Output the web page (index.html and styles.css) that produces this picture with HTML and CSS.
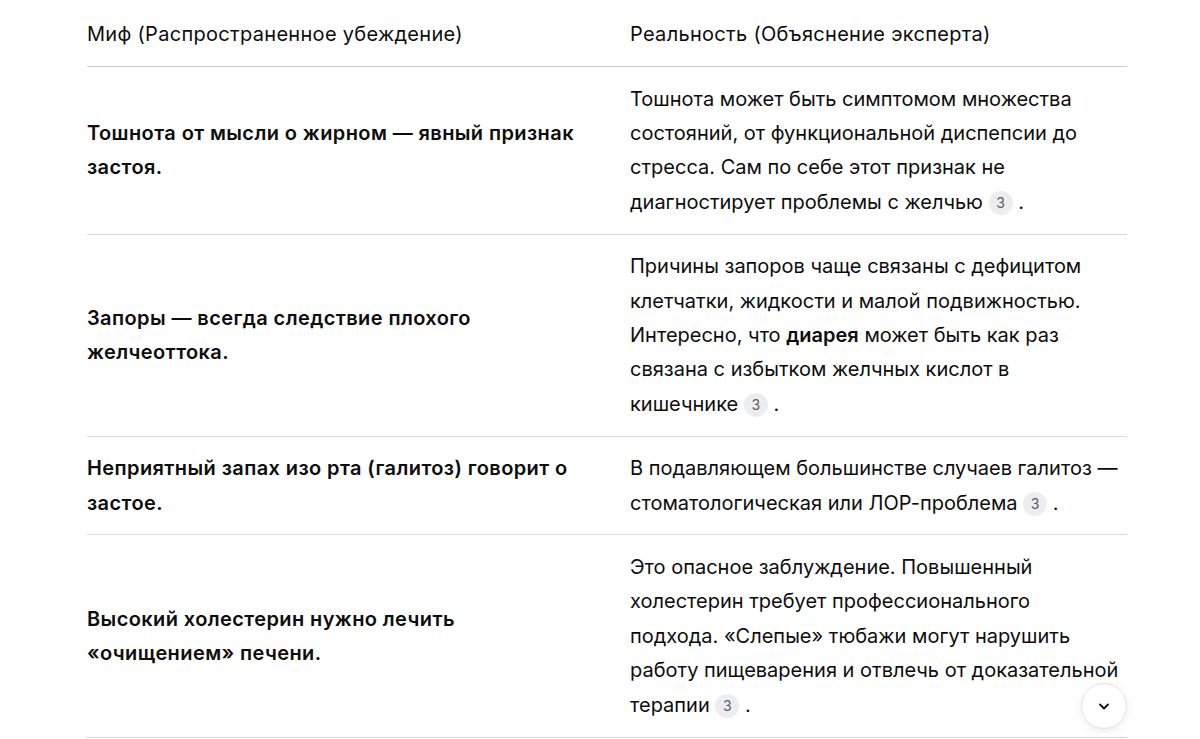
FILE: index.html
```html
<!DOCTYPE html>
<html lang="ru">
<head>
<meta charset="utf-8">
<link rel="stylesheet" href="styles.css">
</head>
<body>
<div class="wrap">
<table class="mt">
<thead>
<tr><th>Миф (Распространенное убеждение)</th><th>Реальность (Объяснение эксперта)</th></tr>
</thead>
<tbody>
<tr>
<td class="myth">Тошнота от мысли о жирном — явный признак застоя.</td>
<td>Тошнота может быть симптомом множества состояний, от функциональной диспепсии до стресса. Сам по себе этот признак не диагностирует проблемы с желчью <span class="cite">3</span> .</td>
</tr>
<tr>
<td class="myth">Запоры — всегда следствие плохого желчеоттока.</td>
<td>Причины запоров чаще связаны с дефицитом клетчатки, жидкости и малой подвижностью. Интересно, что <strong>диарея</strong> может быть как раз связана с избытком желчных кислот в кишечнике <span class="cite">3</span> .</td>
</tr>
<tr>
<td class="myth">Неприятный запах изо рта (галитоз) говорит о застое.</td>
<td>В подавляющем большинстве случаев галитоз — стоматологическая или ЛОР-проблема <span class="cite">3</span> .</td>
</tr>
<tr>
<td class="myth">Высокий холестерин нужно лечить «очищением» печени.</td>
<td>Это опасное заблуждение. Повышенный холестерин требует профессионального подхода. «Слепые» тюбажи могут нарушить работу пищеварения и отвлечь от доказательной терапии <span class="cite">3</span> .</td>
</tr>
</tbody>
</table>
</div>
<button class="scroll-down" aria-label="Прокрутить вниз">
<svg width="16" height="16" viewBox="0 0 16 16" fill="none"><path d="M4 6.5l4 4 4-4" stroke="#111" stroke-width="1.8" stroke-linecap="round" stroke-linejoin="round"/></svg>
</button>
</body>
</html>
```

FILE: styles.css
```css
html, body {
  margin: 0;
  padding: 0;
  background: #fff;
  height: 100%;
  overflow: hidden;
}
body {
  font-family: Inter, "Noto Sans", sans-serif;
  color: #0d0d0d;
  font-size: 20px;
  line-height: 34.4px;
}
.wrap {
  padding: 0 73px 0 87px;
}
.mt {
  width: 100%;
  border-collapse: collapse;
  table-layout: fixed;
}
.mt th {
  font-weight: 400;
  text-align: left;
  letter-spacing: 0.3px;
  line-height: 34px;
  padding: 17px 0 15px 0;
  border-bottom: 1px solid #cfcfcf;
}
.mt th:first-child, .mt td:first-child {
  width: 500px;
  padding-right: 43px;
}
.mt th:last-child, .mt td:last-child {
  padding-right: 5px;
}
.mt td {
  vertical-align: middle;
  padding: 14.5px 0 14.5px 0;
  border-bottom: 1px solid #d9d9d9;
}
.mt td.myth {
  font-weight: 600;
  letter-spacing: 0.4px;
}
.mt strong { font-weight: 600; }
.cite {
  display: inline-flex;
  align-items: center;
  justify-content: center;
  min-width: 24px;
  height: 24px;
  padding: 0 4px;
  box-sizing: border-box;
  border-radius: 12px;
  background: #ecedf0;
  color: #5d5d5d;
  font-size: 14px;
  line-height: 24px;
  vertical-align: 1px;
}
.scroll-down {
  position: fixed;
  left: 1081px;
  top: 683px;
  width: 46px;
  height: 46px;
  border-radius: 50%;
  background: #fff;
  border: 1px solid #e3e3e3;
  box-shadow: 0 2px 8px rgba(0,0,0,0.08);
  display: flex;
  align-items: center;
  justify-content: center;
  padding: 0;
  cursor: pointer;
}
```
